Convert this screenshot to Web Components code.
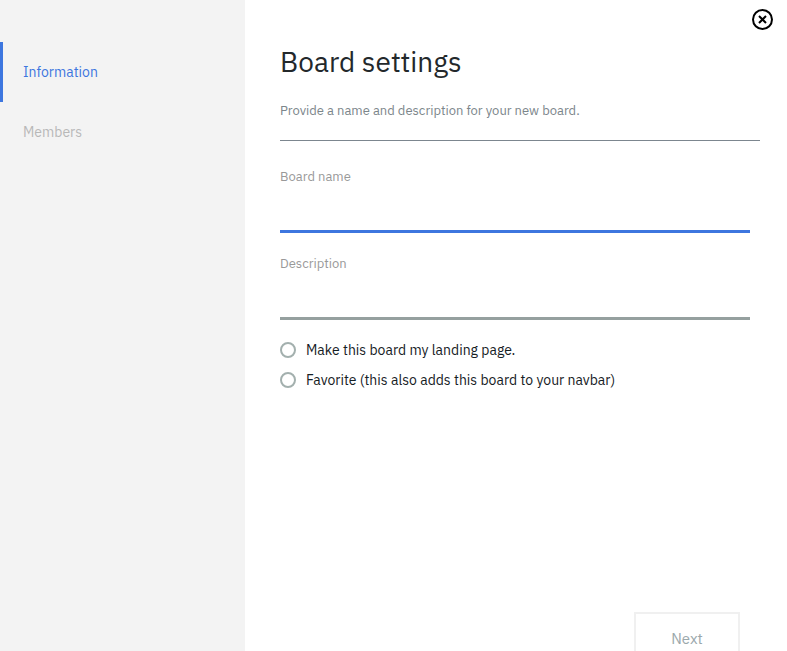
<!DOCTYPE html>
<html lang="en">
<head>
<meta charset="utf-8">
<title>Board settings</title>
<style>
  html { height: 100%; }
  body {
    margin: 0; height: 100%; overflow: hidden; background: #fff; color: #23282b;
    font: 14px/20px "IBM Plex Sans", Roboto, "Liberation Sans", sans-serif;
    --blue: #3d76df; --rail: #f3f3f3; --rule: #7c868f; --muted: #95a09f;
  }
</style>
</head>
<body>
<board-dialog>
  <side-nav slot="nav">
    <nav-item current>Information</nav-item>
    <nav-item>Members</nav-item>
  </side-nav>
  <dialog-header heading="Board settings">Provide a name and description for your new board.</dialog-header>
  <text-field label="Board name" active></text-field>
  <text-field label="Description"></text-field>
  <option-list>
    <round-option>Make this board my landing page.</round-option>
    <round-option>Favorite (this also adds this board to your navbar)</round-option>
  </option-list>
  <close-button slot="close"></close-button>
  <next-button slot="action">Next</next-button>
</board-dialog>

<script>
  const define = (name, html, setup) => {
    const template = document.createElement('template');
    template.innerHTML = html;
    customElements.define(name, class extends HTMLElement {
      constructor() {
        super();
        this.attachShadow({ mode: 'open' }).append(template.content.cloneNode(true));
      }
      connectedCallback() { if (setup) setup(this, this.shadowRoot); }
    });
  };

  define('board-dialog', `
    <style>
      :host { display: grid; grid-template-columns: 245px minmax(0, 1fr); min-height: calc(100% + 15px); }
      main { position: relative; display: flex; flex-direction: column; padding: 42px 27px 0 35px; }
      .close { position: absolute; top: 8px; right: 13px; }
      footer { display: flex; justify-content: flex-end; margin-top: auto; padding-right: 20px; }
    </style>
    <slot name="nav"></slot>
    <main>
      <slot></slot>
      <div class="close"><slot name="close"></slot></div>
      <footer><slot name="action"></slot></footer>
    </main>`);

  define('side-nav', `
    <style>
      :host { display: block; background: var(--rail); padding-top: 42px; }
      nav { display: flex; flex-direction: column; }
    </style>
    <nav aria-label="Settings sections"><slot></slot></nav>`);

  define('nav-item', `
    <style>
      :host { display: block; }
      a { display: block; padding: 20px; border-left: 3px solid transparent; color: #b8b8b8; text-decoration: none; }
      :host([current]) a { border-color: var(--blue); color: var(--blue); }
    </style>
    <a href="#"><slot></slot></a>`,
    (el, root) => { if (el.hasAttribute('current')) root.querySelector('a').setAttribute('aria-current', 'page'); });

  define('dialog-header', `
    <style>
      :host { display: block; border-bottom: 1px solid var(--rule); padding-bottom: 19px; margin-bottom: 25px; }
      h1 { margin: 0 0 19px; font-size: 28px; line-height: 40px; font-weight: 400; }
      p { margin: 0; font-size: 13px; color: #7c868b; }
    </style>
    <h1></h1><p><slot></slot></p>`,
    (el, root) => { root.querySelector('h1').textContent = el.getAttribute('heading'); });

  define('text-field', `
    <style>
      :host { display: block; padding: 1px 10px 20px 0; }
      label { display: block; font-size: 13px; color: #999; }
      input {
        display: block; box-sizing: border-box; width: 100%; height: 46px; padding: 8px 0; margin: 0;
        border: 0; border-bottom: 3px solid var(--muted); border-radius: 0; outline: 0;
        background: none; font: inherit; color: inherit;
      }
      :host([active]) input, input:focus { border-color: var(--blue); }
    </style>
    <label for="field"></label><input id="field" type="text">`,
    (el, root) => { root.querySelector('label').textContent = el.getAttribute('label'); });

  define('option-list', `
    <style>:host { display: flex; flex-direction: column; gap: 10px; }</style>
    <slot></slot>`);

  define('round-option', `
    <style>
      :host { display: block; }
      label { display: flex; align-items: center; gap: 10px; color: #152024; }
      input {
        appearance: none; flex: none; box-sizing: border-box; width: 16px; height: 16px; margin: 0;
        border: 2px solid #a3b0ae; border-radius: 50%; background: #fff;
      }
      input:checked { background: var(--blue); border-color: var(--blue); }
    </style>
    <label><input type="checkbox"><span><slot></slot></span></label>`);

  define('close-button', `
    <style>
      :host { display: block; }
      button { display: block; padding: 0; border: 0; background: none; color: #000; cursor: pointer; }
      svg { display: block; }
    </style>
    <button type="button" aria-label="Close">
      <svg width="23" height="23" viewBox="0 0 23 23" fill="none" stroke="currentColor" stroke-width="2">
        <circle cx="11.5" cy="11.5" r="9.5"/>
        <path d="M8 8l7 7M15 8l-7 7" stroke-width="2"/>
      </svg>
    </button>`);

  define('next-button', `
    <style>
      :host { display: block; }
      button {
        display: block; box-sizing: border-box; min-width: 106px; padding: 15px 20px; border: 2px solid #f0f0f0;
        background: #fff; color: #9ba8ac; font: inherit; font-size: 15px; line-height: 20px;
      }
    </style>
    <button type="button"><slot></slot></button>`);
</script>
</body>
</html>
